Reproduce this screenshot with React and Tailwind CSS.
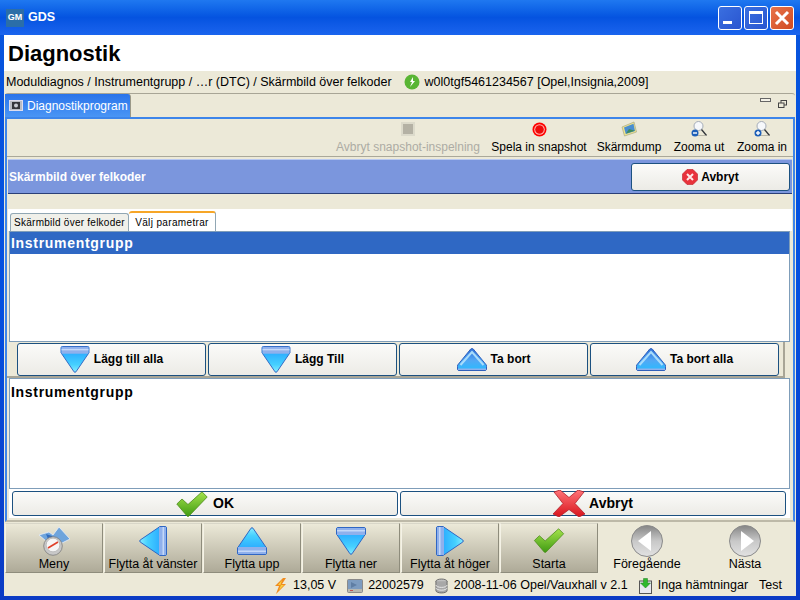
import React from "react";

const FONT = "font-['Liberation_Sans',sans-serif]";

// Big triangle with the pale band on its base, drawn pointing down and turned as needed
const Arrow = ({ id, dir = "down", wide = 30, tall = 28 }) => {
  const vertical = dir === "down" || dir === "up";
  const transform = {
    down: "",
    up: "rotate(180 15 14)",
    left: "translate(28 0) rotate(90)",
    right: "translate(0 30) rotate(-90)",
  }[dir];
  const w = vertical ? wide : tall;
  const h = vertical ? tall : wide;
  return (
    <svg width={w} height={h} viewBox={vertical ? "0 0 30 28" : "0 0 28 30"} className="shrink-0">
      <defs>
        <linearGradient id={id} x1="0" y1="0" x2="0" y2="1">
          <stop offset="0" stopColor="#1f9bff" />
          <stop offset="0.7" stopColor="#45d0ff" />
          <stop offset="1" stopColor="#86ecff" />
        </linearGradient>
      </defs>
      <g transform={transform}>
        <path d="M0.5 2 Q0.5 0.5 2 0.5 H28 Q29.5 0.5 29.5 2 V7 L16 26.8 Q15 27.8 14 26.8 L0.5 7 Z" fill={`url(#${id})`} stroke="#2f66c4" strokeWidth="1" />
        <rect x="1" y="1" width="28" height="7" fill="#8fb0ec" />
        <rect x="1" y="3" width="28" height="1.5" fill="#c4d8f8" />
      </g>
    </svg>
  );
};

// Smaller up arrow of the "Ta bort" buttons: no band, pale chevron inside
const UpChevron = ({ id }) => (
  <svg width="30" height="23" viewBox="0 0 30 23" className="shrink-0">
    <defs>
      <linearGradient id={id} x1="0" y1="0" x2="0" y2="1">
        <stop offset="0" stopColor="#2f6fd8" />
        <stop offset="0.55" stopColor="#52a8f5" />
        <stop offset="1" stopColor="#28bcff" />
      </linearGradient>
    </defs>
    <path d="M15 0.5 Q15.8 0.5 16.5 1.3 L29.3 17 Q29.6 17.6 29.5 21 Q29.3 22.5 28 22.5 H2 Q0.7 22.5 0.5 21 Q0.4 17.6 0.7 17 L13.5 1.3 Q14.2 0.5 15 0.5 Z" fill={`url(#${id})`} stroke="#2f60bc" strokeWidth="1" />
    <path d="M3.5 17 L15 4 L26.5 17" fill="none" stroke="#a9dcfb" strokeWidth="2" />
    <rect x="1" y="20.5" width="28" height="1.5" fill="#8fb0ec" />
  </svg>
);

const Check = ({ id, w = 32, h = 26 }) => (
  <svg width={w} height={h} viewBox="0 0 32 26" className="shrink-0">
    <defs>
      <linearGradient id={id} x1="0" y1="0" x2="0" y2="1">
        <stop offset="0" stopColor="#a5e34c" />
        <stop offset="1" stopColor="#3f9a12" />
      </linearGradient>
    </defs>
    <path d="M0.8 13 L6 8 L12 13.5 L26 0.8 L31.2 6 L13 25 Q12 26 11 25 Z" fill={`url(#${id})`} stroke="#4c8a1c" strokeWidth="0.8" />
  </svg>
);

const RedX = () => (
  <svg width="32" height="27" viewBox="0 0 32 27" className="shrink-0">
    <defs>
      <linearGradient id="redx" x1="0" y1="0" x2="0" y2="1">
        <stop offset="0" stopColor="#ff7478" />
        <stop offset="1" stopColor="#d8141c" />
      </linearGradient>
    </defs>
    <path d="M1 2 L7 0 L16 7.5 L25 0 L31 2 L22 13.5 L32 24 L26 27 L16 19.5 L6 27 L0 24 L10 13.5 Z" fill="url(#redx)" stroke="#b0202a" strokeWidth="0.8" />
  </svg>
);

const RoundArrow = ({ id, dir }) => (
  <svg width="32" height="32" viewBox="0 0 32 32">
    <defs>
      <linearGradient id={id} x1="0" y1="0" x2="0" y2="1">
        <stop offset="0" stopColor="#858585" />
        <stop offset="0.5" stopColor="#c8c8c8" />
        <stop offset="1" stopColor="#e2e2e2" />
      </linearGradient>
    </defs>
    <circle cx="16" cy="16" r="15.5" fill={`url(#${id})`} stroke="#8a8a8a" />
    {dir === "left" ? <path d="M7 16 L20 6 V26 Z" fill="#fff" /> : <path d="M25 16 L12 6 V26 Z" fill="#fff" />}
  </svg>
);

const Magnifier = ({ plus }) => (
  <svg width="16" height="16" viewBox="0 0 16 16">
    <circle cx="7.5" cy="5" r="4.5" fill="#f6f8fb" stroke="#a4acb8" />
    <line x1="10.5" y1="8.5" x2="15.5" y2="14.5" stroke="#30343a" strokeWidth="1.3" />
    <line x1="6" y1="14.5" x2="14" y2="14.5" stroke="#b8b6a8" />
    <circle cx="4" cy="12" r="3.5" fill="#1d5fb8" />
    <rect x="2" y="11.3" width="4" height="1.4" fill="#fff" />
    {plus && <rect x="3.3" y="10" width="1.4" height="4" fill="#fff" />}
  </svg>
);

const ToolItem = ({ icon, label, muted, className = "" }) => (
  <div className={`flex flex-col items-center ${className}`}>
    <div className="h-[18px] flex items-center justify-center">{icon}</div>
    <span className={`text-[12px] leading-[15px] mt-[2px] whitespace-nowrap ${muted ? "text-[#acaca4]" : "text-black"}`}>{label}</span>
  </div>
);

const MoveButton = ({ icon, label }) => (
  <button className="flex-1 h-[33px] flex items-center justify-center gap-[4px] rounded-[3px] border border-[#1c5180] bg-gradient-to-b from-[#fbfbf9] to-[#ecebe6] text-[12px] font-bold text-black">
    {icon}
    <span>{label}</span>
  </button>
);

const NavButton = ({ icon, label }) => (
  <button className="w-[98px] h-[50px] flex flex-col items-center border-l border-t border-l-[#f4f2e6] border-t-[#d8d6c8] border-r border-b border-r-[#8e8c7c] border-b-[#8e8c7c] bg-gradient-to-b from-[#ece9d8] to-[#aeaa98] text-[12.5px] text-black">
    <div className="h-[33px] flex items-center justify-center">{icon}</div>
    <span className="leading-[15px] whitespace-nowrap">{label}</span>
  </button>
);

const StatusItem = ({ icon, children }) => (
  <div className="flex items-center gap-[6px]">
    {icon}
    <span>{children}</span>
  </div>
);

export default function App() {
  return (
    <div className={`w-[800px] h-[600px] flex flex-col overflow-hidden bg-gradient-to-b from-[#0855dd] via-[#0450e0] to-[#0b3bc4] ${FONT}`}>
      {/* Title bar */}
      <div className="h-[35px] shrink-0 flex items-center pl-[6px] pr-[6px] bg-gradient-to-b from-[#1f78f0] via-[#0553e0] to-[#1a64ee]">
        <div className="w-[18px] h-[18px] bg-[#2b6ea8] text-white text-[9px] font-bold flex items-center justify-center">GM</div>
        <span className="ml-[4px] text-[12.5px] font-bold text-white">GDS</span>
        <div className="ml-auto flex gap-[2px]">
          <div className="w-[24px] h-[24px] rounded-[3px] border border-white bg-gradient-to-br from-[#3a6fe0] to-[#2a55d0] flex items-end pl-[4px] pb-[5px]">
            <div className="w-[9px] h-[3px] bg-white" />
          </div>
          <div className="w-[24px] h-[24px] rounded-[3px] border border-white bg-gradient-to-br from-[#3a6fe0] to-[#2a55d0] flex items-center justify-center">
            <div className="w-[14px] h-[13px] border border-white border-t-[3px]" />
          </div>
          <div className="w-[24px] h-[24px] rounded-[3px] border border-white bg-gradient-to-br from-[#e8734a] to-[#d04a20] flex items-center justify-center">
            <svg width="16" height="16" viewBox="0 0 16 16"><path d="M2 2 L14 14 M14 2 L2 14" stroke="#fff" strokeWidth="3" /></svg>
          </div>
        </div>
      </div>

      <div className="flex-1 min-h-0 mx-[4px] mb-[4px] flex flex-col bg-[#ece9d8]">
        {/* Page heading */}
        <div className="h-[36px] shrink-0 bg-white flex items-center pl-[4px] text-[22px] font-bold text-black">Diagnostik</div>

        {/* Breadcrumb */}
        <div className="h-[22px] shrink-0 flex items-center pl-[2px] text-[12.5px] text-black whitespace-nowrap">
          <span>Moduldiagnos / Instrumentgrupp / …r (DTC) / Skärmbild över felkoder</span>
          <svg width="16" height="16" viewBox="0 0 16 16" className="ml-[12px]">
            <circle cx="8" cy="8" r="7.5" fill="#59b534" />
            <path d="M9 3 L6 8 H8 L6 13 L11 7 H9 Z" fill="#fff" />
          </svg>
          <span className="ml-[5px]">w0l0tgf5461234567 [Opel,Insignia,2009]</span>
        </div>

        {/* Dock tab strip */}
        <div className="h-[24px] shrink-0 flex items-stretch border-t border-[#a8a596] rounded-t-[3px] mx-[1px] pr-[8px]">
          <div className="w-[126px] flex items-center gap-[4px] pl-[4px] rounded-tr-[3px] border-r border-[#9a9888] bg-gradient-to-b from-[#2a74ea] to-[#4a95f5] text-white text-[12px]">
            <svg width="14" height="11" viewBox="0 0 14 11" className="shrink-0">
              <rect x="0.5" y="0.5" width="13" height="10" fill="#b8bcc4" stroke="#dde" />
              <rect x="3" y="2" width="8" height="7" fill="#33363c" />
              <circle cx="7" cy="5.5" r="2" fill="#c8ccd4" />
            </svg>
            <span>Diagnostikprogram</span>
          </div>
          <div className="ml-auto flex items-start pt-[4px] gap-[7px]">
            <div className="w-[11px] h-[4px] border border-[#666] bg-[#f4f2e8]" />
            <svg width="9" height="8" viewBox="0 0 9 8" className="mt-[2px]">
              <rect x="3" y="0.5" width="5.5" height="4.5" fill="none" stroke="#444" />
              <rect x="0.5" y="3" width="5.5" height="4.5" fill="#ece9d8" stroke="#444" />
            </svg>
          </div>
        </div>

        {/* Main panel */}
        <div className="h-[405px] shrink-0 mx-[1px] border-2 border-[#3d85ea] border-b-[#bdb9a8] flex flex-col">
          {/* Toolbar */}
          <div className="h-[38px] shrink-0 flex items-start justify-end pr-[6px] border-b border-[#aaa89a] pt-[1px]">
            <ToolItem muted className="w-[146px] mr-[10px]" label="Avbryt snapshot-inspelning" icon={<div className="w-[14px] h-[14px] bg-[#b4b1a4] border-2 border-[#dcdacb]" />} />
            <ToolItem className="w-[96px] mr-[10px]" label="Spela in snapshot" icon={
              <svg width="15" height="15" viewBox="0 0 15 15">
                <circle cx="7.5" cy="7.5" r="7" fill="#f00" />
                <circle cx="7.5" cy="7.5" r="5.3" fill="#ffb8b0" />
                <circle cx="7.5" cy="7.5" r="4.3" fill="#ee0a0a" />
              </svg>
            } />
            <ToolItem className="w-[64px] mr-[12px]" label="Skärmdump" icon={
              <svg width="16" height="16" viewBox="0 0 16 16">
                <path d="M1 6 L13 1 L15.5 11 L3.5 15 Z" fill="#f0e48a" stroke="#a8a888" strokeWidth="0.7" />
                <path d="M3 6.5 L12.5 2.7 L14 10 L4.8 13 Z" fill="#4a8ed0" />
                <path d="M5 12.5 L8 8 L13.8 9.8 Z" fill="#3f8a5a" />
              </svg>
            } />
            <ToolItem className="w-[52px] mr-[12px]" label="Zooma ut" icon={<Magnifier />} />
            <ToolItem className="w-[50px]" label="Zooma in" icon={<Magnifier plus />} />
          </div>

          {/* Banner */}
          <div className="h-[35px] shrink-0 mt-[2px] mx-[1px] flex items-center justify-between pl-[1px] pr-[2px] bg-[#7b96dd] border-t border-t-[#b8c8f0] border-b border-b-[#2a3f78]">
            <span className="text-[12px] font-bold text-white">Skärmbild över felkoder</span>
            <button className="w-[159px] h-[28px] flex items-center justify-center gap-[3px] rounded-[3px] border border-[#1c5180] bg-gradient-to-b from-[#fbfbf9] to-[#ecebe6] text-[12px] font-bold text-black">
              <svg width="16" height="16" viewBox="0 0 16 16">
                <path d="M5 0.5 H11 L15.5 5 V11 L11 15.5 H5 L0.5 11 V5 Z" fill="#e8323c" stroke="#c0202a" strokeWidth="0.6" />
                <path d="M5 5 L11 11 M11 5 L5 11" stroke="#ffe8e8" strokeWidth="2" />
              </svg>
              Avbryt
            </button>
          </div>

          <div className="h-[15px] shrink-0" />

          {/* Inner tabs */}
          <div className="h-[22px] shrink-0 bg-white flex items-end pl-[2px] mx-[1px]">
            <div className="w-[119px] h-[18px] flex items-center justify-center rounded-t-[3px] border border-b-0 border-[#91a7b4] bg-[#f0f0ea] text-[10px] tracking-[0.25px]">Skärmbild över felkoder</div>
            <div className="w-[87px] h-[20px] flex items-center justify-center rounded-t-[3px] border-t-2 border-t-[#f6a628] border-r border-r-[#91a7b4] bg-white text-[10px] tracking-[0.35px]">Välj parametrar</div>
          </div>

          {/* Source list */}
          <div className="h-[111px] shrink-0 mr-[3px] ml-[2px] bg-white border border-[#7f9db9]">
            <div className="h-[22px] bg-[#2f68c4] flex items-center pl-[1px] pt-[1px] text-[14px] font-bold tracking-[0.7px] text-white">Instrumentgrupp</div>
          </div>

          {/* Move buttons */}
          <div className="h-[36px] shrink-0 flex items-center gap-[2px] pl-[10px] pr-[4px] mr-[8px] border-r-2 border-b-2 border-[#a8a596]">
            <MoveButton label="Lägg till alla" icon={<Arrow id="a1" wide={30} tall={27} />} />
            <MoveButton label="Lägg Till" icon={<Arrow id="a2" wide={30} tall={27} />} />
            <MoveButton label="Ta bort" icon={<UpChevron id="a3" />} />
            <MoveButton label="Ta bort alla" icon={<UpChevron id="a4" />} />
          </div>

          {/* Target list */}
          <div className="h-[111px] shrink-0 mr-[3px] ml-[2px] bg-white border border-[#7f9db9] pl-[1px] pt-[3px] text-[14px] font-bold tracking-[0.7px] text-black">Instrumentgrupp</div>

          {/* Confirm buttons */}
          <div className="h-[29px] shrink-0 flex items-center gap-[2px] pl-[3px] pr-[4px] bg-white mr-[3px] ml-[2px]">
            <button className="flex-1 h-[25px] flex items-center justify-center gap-[5px] rounded-[3px] border border-[#1c5180] bg-gradient-to-b from-[#fbfbf9] to-[#ecebe6] text-[14px] font-bold text-black">
              <Check id="ok" />
              OK
            </button>
            <button className="flex-1 h-[25px] flex items-center justify-center gap-[4px] rounded-[3px] border border-[#1c5180] bg-gradient-to-b from-[#fbfbf9] to-[#ecebe6] text-[14px] font-bold text-black">
              <RedX />
              Avbryt
            </button>
          </div>
        </div>

        {/* Navigation buttons */}
        <div className="h-[52px] shrink-0 flex items-center gap-[1px] pl-[1px]">
          <NavButton label="Meny" icon={
            <svg width="32" height="30" viewBox="0 0 32 30">
              <path d="M1 9 L11 6 L15 9 L21 1 L32 13 L24 17 L8 15 Z" fill="#6ea4dc" stroke="#e8eef8" strokeWidth="0.8" />
              <path d="M8 8 L14 10 L17 14 L10 13 Z" fill="#2f6cc0" />
              <circle cx="15" cy="20" r="9.3" fill="#c8c8c8" stroke="#7c7c7c" strokeWidth="0.8" />
              <circle cx="15" cy="19" r="6.8" fill="#f6f6f6" stroke="#a0a0a0" strokeWidth="0.5" />
              <path d="M10 22 L20 16" stroke="#e0402a" strokeWidth="1.6" />
            </svg>
          } />
          <NavButton label="Flytta åt vänster" icon={<Arrow id="n1" dir="left" />} />
          <NavButton label="Flytta upp" icon={<Arrow id="n2" dir="up" />} />
          <NavButton label="Flytta ner" icon={<Arrow id="n3" dir="down" />} />
          <NavButton label="Flytta åt höger" icon={<Arrow id="n4" dir="right" />} />
          <NavButton label="Starta" icon={<Check id="st" h={25} />} />
          <div className="flex-1 flex ml-[-1px] text-[12.5px] text-black">
            <div className="w-[98px] flex flex-col items-center">
              <div className="h-[33px] flex items-center"><RoundArrow id="r1" dir="left" /></div>
              <span className="leading-[15px]">Föregående</span>
            </div>
            <div className="w-[98px] flex flex-col items-center">
              <div className="h-[33px] flex items-center"><RoundArrow id="r2" dir="right" /></div>
              <span className="leading-[15px]">Nästa</span>
            </div>
          </div>
        </div>

        {/* Status bar */}
        <div className="flex-1 flex items-center justify-end gap-[11px] pt-[1px] pr-[14px] text-[12.5px] text-black whitespace-nowrap">
          <StatusItem icon={
            <svg width="13" height="16" viewBox="0 0 13 16">
              <path d="M9 0 L1 8 H5 L2 16 L12 6 H8 L12 0 Z" fill="#f08c1e" />
              <path d="M8 2 L4 7 H7 L5 12 L10 7 H6.5 Z" fill="#f8d040" />
            </svg>
          }>13,05 V</StatusItem>
          <StatusItem icon={
            <svg width="16" height="14" viewBox="0 0 16 14" className="mr-[-1px]">
              <rect x="0.5" y="0.5" width="15" height="13" rx="1" fill="#7d9cc0" stroke="#8a8a8a" />
              <path d="M4 3 L10 6 L4 9 Z" fill="#5f7ea4" />
              <rect x="1" y="10" width="14" height="3" fill="#b8b8b0" />
              <rect x="3" y="11" width="3" height="1" fill="#c05050" />
            </svg>
          }>22002579</StatusItem>
          <StatusItem icon={
            <svg width="13" height="16" viewBox="0 0 14 16">
              <ellipse cx="7" cy="3" rx="6" ry="2.5" fill="#c0c0c0" stroke="#666" />
              <path d="M1 3 V13 A6 2.5 0 0 0 13 13 V3" fill="#a8a8a8" stroke="#666" />
              <path d="M1 7 A6 2.5 0 0 0 13 7 M1 10 A6 2.5 0 0 0 13 10" fill="none" stroke="#eee" />
            </svg>
          }>2008-11-06 Opel/Vauxhall v 2.1</StatusItem>
          <StatusItem icon={
            <svg width="13" height="16" viewBox="0 0 13 16">
              <rect x="0.5" y="3" width="12" height="12.5" fill="#e8e8f0" stroke="#555" />
              <path d="M6.5 10 L1.5 5 H4.5 V0.5 H8.5 V5 H11.5 Z" fill="#2eb82e" stroke="#1c7c1c" strokeWidth="0.5" />
            </svg>
          }>Inga hämtningar</StatusItem>
          <span>Test</span>
        </div>
      </div>
    </div>
  );
}
